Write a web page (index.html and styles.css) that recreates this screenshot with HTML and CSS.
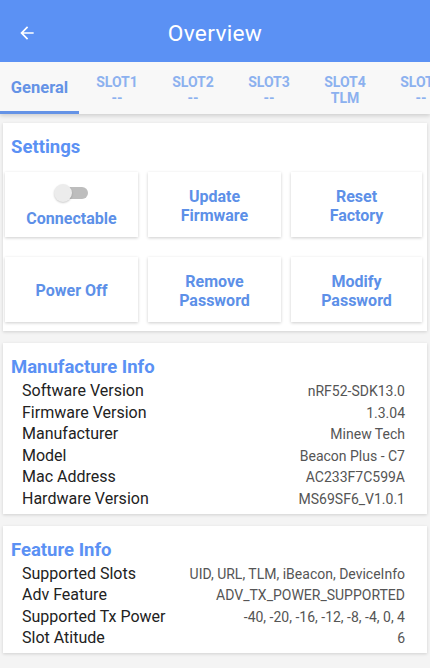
FILE: index.html
```html
<!DOCTYPE html>
<html lang="en">
<head>
    <meta charset="UTF-8">
    <meta name="viewport" content="width=device-width, initial-scale=1.0">
    <title>Overview</title>
    <link rel="stylesheet" href="styles.css">
</head>
<body>

<header class="topbar">
    <svg class="back" width="20" height="20" viewBox="0 0 24 24">
        <path d="M20 11H7.83l5.59-5.59L12 4l-8 8 8 8 1.41-1.41L7.83 13H20v-2z" fill="#fff"/>
    </svg>
    <div class="title">Overview</div>
</header>

<nav class="tabs">
    <div class="tab active">General</div>
    <div class="tab">SLOT1<span>--</span></div>
    <div class="tab">SLOT2<span>--</span></div>
    <div class="tab">SLOT3<span>--</span></div>
    <div class="tab">SLOT4<span>TLM</span></div>
    <div class="tab">SLOT5<span>--</span></div>
</nav>

<div class="content">
    <section class="card settings">
        <h2>Settings</h2>
        <div class="grid">
            <div class="btn connect">
                <div class="switch"><div class="knob"></div></div>
                Connectable
            </div>
            <div class="btn">Update<br>Firmware</div>
            <div class="btn">Reset<br>Factory</div>
            <div class="btn">Power Off</div>
            <div class="btn">Remove<br>Password</div>
            <div class="btn">Modify<br>Password</div>
        </div>
    </section>

    <section class="card info">
        <h2>Manufacture Info</h2>
        <div class="row"><span class="label">Software Version</span><span class="value">nRF52-SDK13.0</span></div>
        <div class="row"><span class="label">Firmware Version</span><span class="value">1.3.04</span></div>
        <div class="row"><span class="label">Manufacturer</span><span class="value">Minew Tech</span></div>
        <div class="row"><span class="label">Model</span><span class="value">Beacon Plus - C7</span></div>
        <div class="row"><span class="label">Mac Address</span><span class="value">AC233F7C599A</span></div>
        <div class="row"><span class="label">Hardware Version</span><span class="value">MS69SF6_V1.0.1</span></div>
    </section>

    <section class="card info">
        <h2>Feature Info</h2>
        <div class="row"><span class="label">Supported Slots</span><span class="value">UID, URL, TLM, iBeacon, DeviceInfo</span></div>
        <div class="row"><span class="label">Adv Feature</span><span class="value">ADV_TX_POWER_SUPPORTED</span></div>
        <div class="row"><span class="label">Supported Tx Power</span><span class="value">-40, -20, -16, -12, -8, -4, 0, 4</span></div>
        <div class="row"><span class="label">Slot Atitude</span><span class="value">6</span></div>
    </section>
</div>

</body>
</html>
```

FILE: styles.css
```css
body {
    margin: 0;
    padding: 0;
    font-family: Roboto, "Liberation Sans", sans-serif;
    background-color: #f4f4f4;
    overflow: hidden;
}
.topbar {
    height: 62px;
    box-sizing: border-box;
    padding-top: 4px;
    background-color: #5b91f4;
    display: flex;
    align-items: center;
    position: relative;
}
.back {
    margin-left: 17px;
}
.title {
    position: absolute;
    left: 0;
    right: 0;
    text-align: center;
    color: white;
    font-size: 22.7px;
    letter-spacing: 0.3px;
}
.tabs {
    display: flex;
    height: 52px;
    background-color: #f8f8f8;
    box-shadow: 0 2px 4px rgba(0, 0, 0, 0.15);
    white-space: nowrap;
    overflow: hidden;
}
.tab {
    flex: 0 0 76px;
    display: flex;
    flex-direction: column;
    align-items: center;
    justify-content: center;
    color: #8cb1ef;
    font-size: 14px;
    font-weight: bold;
    line-height: 16px;
    padding-top: 4px;
    box-sizing: border-box;
}
.tab.active {
    flex-basis: 79px;
    color: #6593e6;
    font-size: 16.5px;
    border-bottom: 3px solid #6593e6;
    padding-top: 3px;
}
.content {
    padding: 9px 3px 0 3px;
}
.card {
    background-color: #fff;
    box-shadow: 0 1px 3px rgba(0, 0, 0, 0.15);
    margin-bottom: 12px;
}
.card h2 {
    margin: 0;
    color: #5b91f4;
    font-size: 18.5px;
    line-height: 20px;
    font-weight: bold;
}
.settings {
    padding: 14px 5px 9px 2px;
}
.settings h2 {
    margin-left: 6px;
    margin-bottom: 15px;
}
.grid {
    display: grid;
    grid-template-columns: 133px 133px 131px;
    column-gap: 10px;
    row-gap: 20px;
}
.btn {
    height: 65px;
    box-sizing: border-box;
    padding-top: 2px;
    background-color: #fff;
    box-shadow: 0 1px 3px rgba(0, 0, 0, 0.2);
    display: flex;
    flex-direction: column;
    align-items: center;
    justify-content: center;
    text-align: center;
    color: #5d90e8;
    font-size: 16px;
    font-weight: bold;
    line-height: 19px;
}
.btn.connect {
    padding-top: 6px;
}
.switch {
    width: 30px;
    height: 12px;
    border-radius: 6px;
    background-color: #bdbdbd;
    position: relative;
    margin-bottom: 10px;
    margin-left: 2px;
}
.knob {
    position: absolute;
    left: -4px;
    top: -3px;
    width: 18px;
    height: 18px;
    border-radius: 50%;
    background-color: #ececec;
    box-shadow: 0 1px 2px rgba(0, 0, 0, 0.2);
}
.info {
    padding: 14px 22px 3px 8px;
}
.info h2 {
    margin-bottom: 4px;
}
.row {
    display: flex;
    justify-content: space-between;
    align-items: baseline;
    height: 21.6px;
    padding-left: 11px;
}
.label {
    color: #222;
    font-size: 16px;
}
.value {
    color: #555;
    font-size: 14px;
}
```
